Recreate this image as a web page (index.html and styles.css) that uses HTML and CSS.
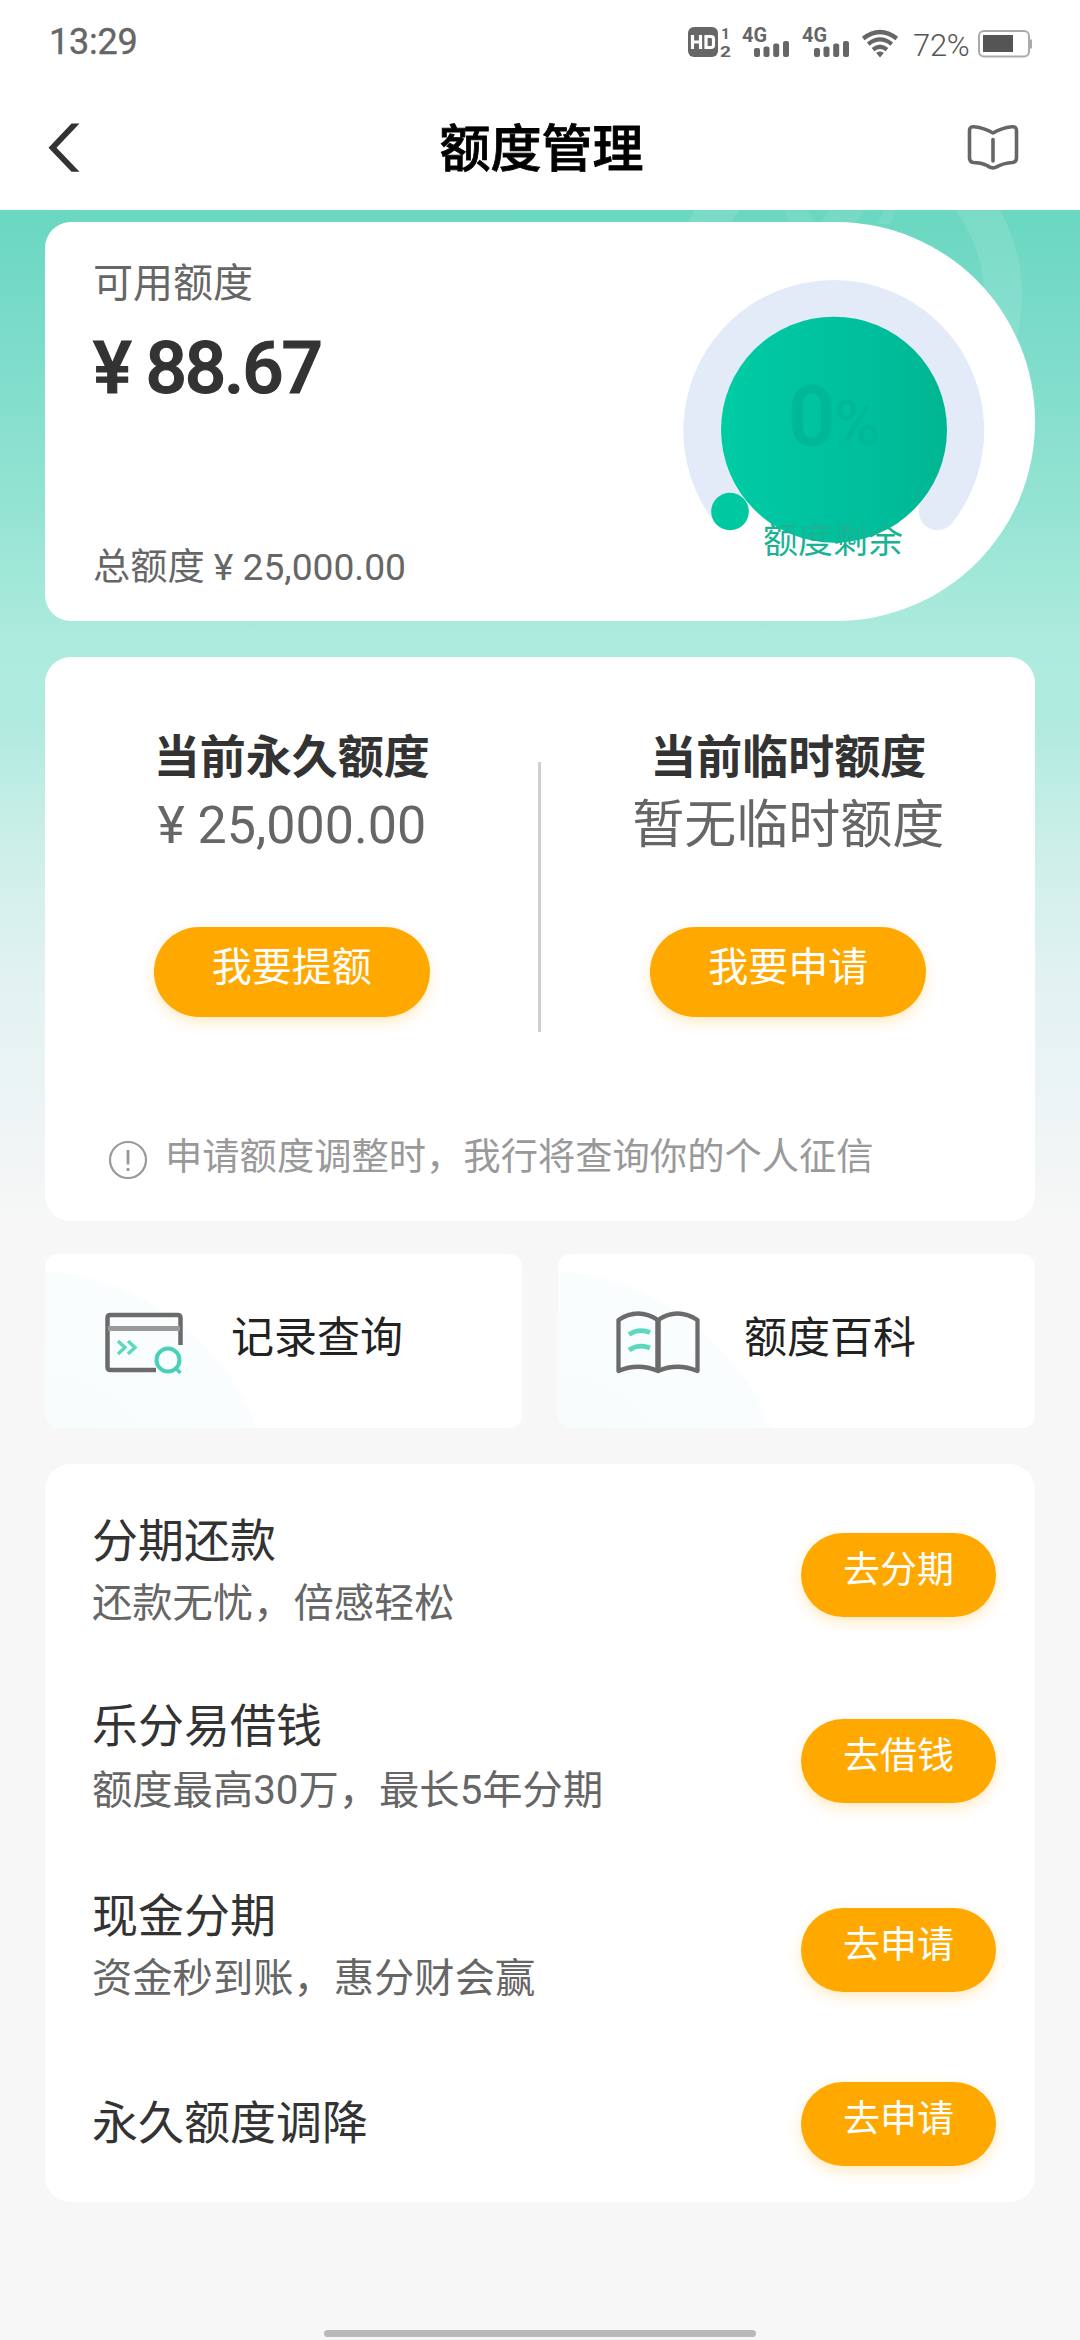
FILE: index.html
```html
<!DOCTYPE html>
<html lang="zh-CN">
<head>
<meta charset="utf-8">
<title>额度管理</title>
<link rel="stylesheet" href="styles.css">
</head>
<body>
<div class="page">
  <div class="statusbar">
    <span class="clock">13:29</span>
    <div class="status-icons">
      <svg class="hd" width="44" height="34" viewBox="0 0 44 34">
        <rect x="0" y="1" width="30" height="30" rx="6" fill="#666"/>
        <path d="M4.500 9v14M12.500 9v14M4.500 16h8M18 10.500v11h5q2.500 0 2.500-2.500v-6q0-2.500-2.500-2.500z" fill="none" stroke="#fff" stroke-width="3.200"/>
        <text x="33" y="13" class="sim">1</text>
        <text x="32" y="31" class="sim" textLength="11" lengthAdjust="spacingAndGlyphs">2</text>
      </svg>
      <svg class="signal" width="48" height="34" viewBox="0 0 48 34">
        <text x="0" y="16" class="net" textLength="25" lengthAdjust="spacingAndGlyphs">4G</text>
        <g fill="#666"><rect x="12" y="22" width="6" height="9" rx="2"/><rect x="21.500" y="20.500" width="6" height="10.500" rx="2"/><rect x="31.200" y="17.500" width="6" height="13.500" rx="2"/><rect x="41" y="15" width="6" height="16" rx="2"/></g>
      </svg>
      <svg class="signal" width="48" height="34" viewBox="0 0 48 34">
        <text x="0" y="16" class="net" textLength="25" lengthAdjust="spacingAndGlyphs">4G</text>
        <g fill="#666"><rect x="12" y="22" width="6" height="9" rx="2"/><rect x="21.500" y="20.500" width="6" height="10.500" rx="2"/><rect x="31.200" y="17.500" width="6" height="13.500" rx="2"/><rect x="41" y="15" width="6" height="16" rx="2"/></g>
      </svg>
      <svg class="wifi" width="36" height="30" viewBox="0 0 36 30">
        <g fill="none" stroke="#666" stroke-width="4.200"><path d="M1.200 9.500Q18-3.500 34.800 9.500"/><path d="M6.200 15.200Q18 5.700 29.800 15.200"/><path d="M11 20.700Q18 14.700 25 20.700"/></g>
        <path d="M18 28.500l-3.800-4.600q3.800-2.800 7.600 0z" fill="#666"/>
      </svg>
      <span class="percent">72%</span>
      <svg class="battery" width="55" height="28" viewBox="0 0 55 28">
        <rect x="1" y="1" width="50" height="25.500" rx="5" fill="none" stroke="#aaa" stroke-width="2"/>
        <rect x="5" y="5" width="30" height="17" fill="#555"/>
        <path d="M53 9.500v9" stroke="#aaa" stroke-width="2"/>
      </svg>
    </div>
  </div>

  <header class="navbar">
    <svg class="nav-icon" width="40" height="50" viewBox="0 0 40 50">
      <path d="M0.500 24.800L23.500 0.500h8L8.500 24.800l23 24h-8z" fill="#333"/>
    </svg>
    <h1>额度管理</h1>
    <svg class="nav-icon" width="52" height="48" viewBox="0 0 52 48">
      <path d="M26 9Q17 4 7.500 2.800Q2.500 2 2.500 6.500V34Q2.500 38 6.500 38.500Q14 38.500 20 41.500Q24.500 45 28.500 43.300Q37 38.800 45.500 38.500Q49.500 38 49.500 34V6.500Q49.500 2 44.500 2.800Q35 4 26 9z" fill="none" stroke="#666" stroke-width="3.600" stroke-linejoin="round"/>
      <path d="M26 15.500v21.500" stroke="#666" stroke-width="3.600" stroke-linecap="round"/>
    </svg>
  </header>

  <main class="content">
    <svg class="watermark" width="400" height="300" viewBox="680 210 400 300">
      <circle cx="847" cy="295" r="156" fill="none" stroke="#fff" stroke-opacity=".11" stroke-width="38"/>
      <path d="M783 210h24l8 14h-24zM830 210h36l-12 14h-34zM884 210h12l-6 14h-12z" fill="#fff" fill-opacity=".08"/>
    </svg>

    <section class="card limit">
      <div class="limit-text">
        <p class="limit-label">可用额度</p>
        <p class="limit-amount">¥ 88.67</p>
        <p class="limit-total">总额度 ¥ 25,000.00</p>
      </div>
      <svg class="gauge" width="302" height="302" viewBox="683 278 302 302">
        <defs>
          <linearGradient id="disc"><stop offset="0" stop-color="#00cca4"/><stop offset=".45" stop-color="#00c29e"/><stop offset=".7" stop-color="#00be9b"/><stop offset="1" stop-color="#00b592"/></linearGradient>
        </defs>
        <path d="M730 510.500A131.700 131.700 0 1 1 937.500 510.500" fill="none" stroke="#e4ebf8" stroke-width="37.500" stroke-linecap="round"/>
        <circle cx="834" cy="428.700" r="113" fill="url(#disc)"/>
        <circle cx="730" cy="510.500" r="18.800" fill="#00c8a0"/>
        <text x="788" y="444" class="gauge-num">0</text>
        <text x="834" y="444" class="gauge-unit">%</text>
        <text x="763" y="552" class="gauge-label">额度剩余</text>
      </svg>
    </section>

    <section class="card adjust">
      <div class="adjust-cols">
        <div class="adjust-col">
          <h2>当前永久额度</h2>
          <p class="adjust-value">¥ 25,000.00</p>
          <a class="btn btn-lg">我要提额</a>
        </div>
        <div class="divider"></div>
        <div class="adjust-col">
          <h2>当前临时额度</h2>
          <p class="adjust-value">暂无临时额度</p>
          <a class="btn btn-lg">我要申请</a>
        </div>
      </div>
      <div class="note">
        <svg width="40" height="40" viewBox="0 0 40 40"><circle cx="20" cy="20" r="18" fill="none" stroke="#999" stroke-width="2.200"/><path d="M20 10v14.500M20 28v3" stroke="#999" stroke-width="2.800"/></svg>
        <span>申请额度调整时，我行将查询你的个人征信</span>
      </div>
    </section>

    <section class="shortcuts">
      <a class="shortcut">
        <svg width="84" height="66" viewBox="0 0 84 66">
          <path d="M77.500 34V7q0-3-3-3H7.500q-3 0-3 3v49q0 3 3 3H53" fill="none" stroke="#6b6b6b" stroke-width="4.500"/>
          <path d="M5 17.500h72" stroke="#999" stroke-width="4.800"/>
          <path d="M15 30l7 6.500l-7 6.500M25 30l7 6.500l-7 6.500" fill="none" stroke="#5cd8bd" stroke-width="3.400"/>
          <circle cx="65" cy="49" r="11.500" fill="#fafdfd" stroke="#4ad0b4" stroke-width="4"/>
          <path d="M72.500 57l5 5" stroke="#4ad0b4" stroke-width="3.600"/>
        </svg>
        <span>记录查询</span>
      </a>
      <a class="shortcut">
        <svg width="84" height="66" viewBox="0 0 84 66">
          <path d="M42 9Q32 2.500 22 2.500T2.500 9V60Q22 51.500 42 60Q61 51.500 81.500 60V9Q71.500 2.500 61.500 2.500T42 9z" fill="none" stroke="#6b6b6b" stroke-width="4.300" stroke-linejoin="round"/>
          <path d="M42 9v51" stroke="#6b6b6b" stroke-width="5.500"/>
          <path d="M13 23.500Q23 17 34 21.500M13 39Q23 32.500 34 37" fill="none" stroke="#5cd8bd" stroke-width="4.800"/>
        </svg>
        <span>额度百科</span>
      </a>
    </section>

    <section class="card services">
      <div class="service">
        <div class="service-text"><h3>分期还款</h3><p>还款无忧，倍感轻松</p></div>
        <a class="btn">去分期</a>
      </div>
      <div class="service">
        <div class="service-text roomy"><h3>乐分易借钱</h3><p>额度最高30万，最长5年分期</p></div>
        <a class="btn">去借钱</a>
      </div>
      <div class="service tall">
        <div class="service-text"><h3>现金分期</h3><p>资金秒到账，惠分财会赢</p></div>
        <a class="btn">去申请</a>
      </div>
      <div class="service short">
        <div class="service-text"><h3>永久额度调降</h3></div>
        <a class="btn">去申请</a>
      </div>
    </section>
  </main>

  <div class="home-bar"></div>
</div>
</body>
</html>
```

FILE: styles.css
```css
* { box-sizing: border-box; }
body, h1, h2, h3, p { margin: 0; font-weight: 400; }
svg { display: block; flex: none; overflow: visible; }
body {
  font-family: Roboto, "Noto Sans CJK SC", sans-serif;
  color: #333;
  background: #f7f7f7;
}
.page {
  width: 1080px;
  height: 2340px;
  display: flex;
  flex-direction: column;
  overflow: hidden;
}

.statusbar {
  height: 84px;
  padding: 0 47px 0 49px;
  display: flex;
  justify-content: space-between;
  background: #fff;
}
.clock { font-size: 36px; line-height: 84px; color: #666; -webkit-text-stroke: .4px #666; letter-spacing: -.2px; }
.status-icons { display: flex; align-items: flex-start; }
.status-icons svg { margin-top: 26px; }
.status-icons .signal { margin-left: 10px; margin-right: 2px; }
.status-icons .wifi { margin-left: 10px; margin-top: 29px; }
.status-icons .battery { margin-left: 9px; margin-top: 30px; }
.percent { width: 56px; margin-left: 15px; font-size: 31px; font-weight: 300; line-height: 92px; color: #555; letter-spacing: -.3px; }
.sim { font-size: 15.500px; font-weight: 700; fill: #666; }
.net { font-size: 21px; font-weight: 700; fill: #666; }

.navbar {
  height: 126px;
  padding: 2px 61px 0 48px;
  display: flex;
  align-items: center;
  justify-content: space-between;
  background: #fff;
}
.navbar h1 { font-size: 51px; font-weight: 500; line-height: 70px; color: #000; -webkit-text-stroke: .8px #000; margin-left: 28px; padding-top: 3px; }

.content {
  position: relative;
  flex: 1;
  padding: 12px 45px 0;
  background: linear-gradient(#6ad7c0 0, #76dac7 90px, #93e3d2 290px, #adebde 430px, #b1ebe0 520px, #cdefe9 640px, #e2f2f2 770px, #eef4f5 910px, #f7f7f7 1010px);
}
.watermark { position: absolute; top: 0; right: 0; overflow: hidden; }

.card { position: relative; background: #fff; border-radius: 26px; }

.limit {
  height: 399px;
  padding: 35px 50px 0 48px;
  border-radius: 26px 199px 199px 26px;
  display: flex;
  justify-content: space-between;
}
.limit-label { font-size: 40px; line-height: 54px; color: #666; }
.limit-amount { margin-top: 15px; font-size: 73px; font-weight: 500; -webkit-text-stroke: 1.200px #333; line-height: 84px; letter-spacing: -2.200px; }
.limit-total { margin-top: 132px; font-size: 37.200px; line-height: 50px; color: #666; }
.gauge { margin-top: 22px; }
.gauge-num { font-size: 84px; font-weight: 500; fill: #00b897; stroke: #00b897; stroke-width: 1px; }
.gauge-unit { font-size: 63px; font-weight: 500; fill: #00b897; }
.gauge-label { font-size: 35px; fill: #19b394; }

.adjust { height: 564px; margin-top: 36px; }
.adjust-cols { height: 483px; display: flex; }
.adjust-col { flex: 1; padding-top: 70px; display: flex; flex-direction: column; align-items: center; }
.adjust-col h2 { font-size: 46px; font-weight: 700; line-height: 60px; }
.adjust-value { margin: 4px 0 66px; font-size: 52px; line-height: 70px; color: #666; }
.divider { width: 3px; height: 270px; margin-top: 105px; margin-left: -1px; margin-right: 1px; background: #d0d0d0; }
.note { display: flex; align-items: center; padding-left: 63px; font-size: 37.300px; color: #999; }
.note span { margin: -7px 0 0 17px; line-height: 40px; }

.btn {
  width: 195px;
  height: 84px;
  border-radius: 42px;
  background: #ffa800;
  box-shadow: 0 5px 14px rgba(255, 168, 0, .24);
  color: #fff;
  font-size: 37px;
  line-height: 76px;
  text-align: center;
}
.btn-lg { width: 276px; height: 90px; border-radius: 45px; font-size: 40px; line-height: 81px; }

.shortcuts { position: relative; margin-top: 33px; display: flex; gap: 36px; }
.shortcut {
  flex: 1;
  height: 174px;
  padding: 0 0 0 58px;
  border-radius: 13px;
  display: flex;
  align-items: center;
  color: #222;
  font-size: 43px;
  background: radial-gradient(circle at -20px 266px, #f5fbfb 0, #f9fdfd 249px, #fff 251px);
}
.shortcut svg { margin-top: 5px; }
.shortcut span { margin: -6px 0 0 44px; line-height: 60px; }

.services { height: 738px; margin-top: 36px; padding: 18px 39px 0 47px; }
.service { height: 186px; display: flex; align-items: center; justify-content: space-between; }
.service.tall { height: 192px; }
.service.short { height: 156px; }
.service-text { display: flex; flex-direction: column; gap: 3px; padding-bottom: 6px; }
.service.short .service-text { padding-bottom: 3px; }
.service-text.roomy { gap: 5px; }
.service h3 { font-size: 46px; line-height: 60px; }
.service p { font-size: 40.300px; line-height: 60px; color: #666; }

.home-bar { position: absolute; left: 324px; top: 2330px; width: 432px; height: 7px; border-radius: 4px; background: #b9b9b9; }
```
